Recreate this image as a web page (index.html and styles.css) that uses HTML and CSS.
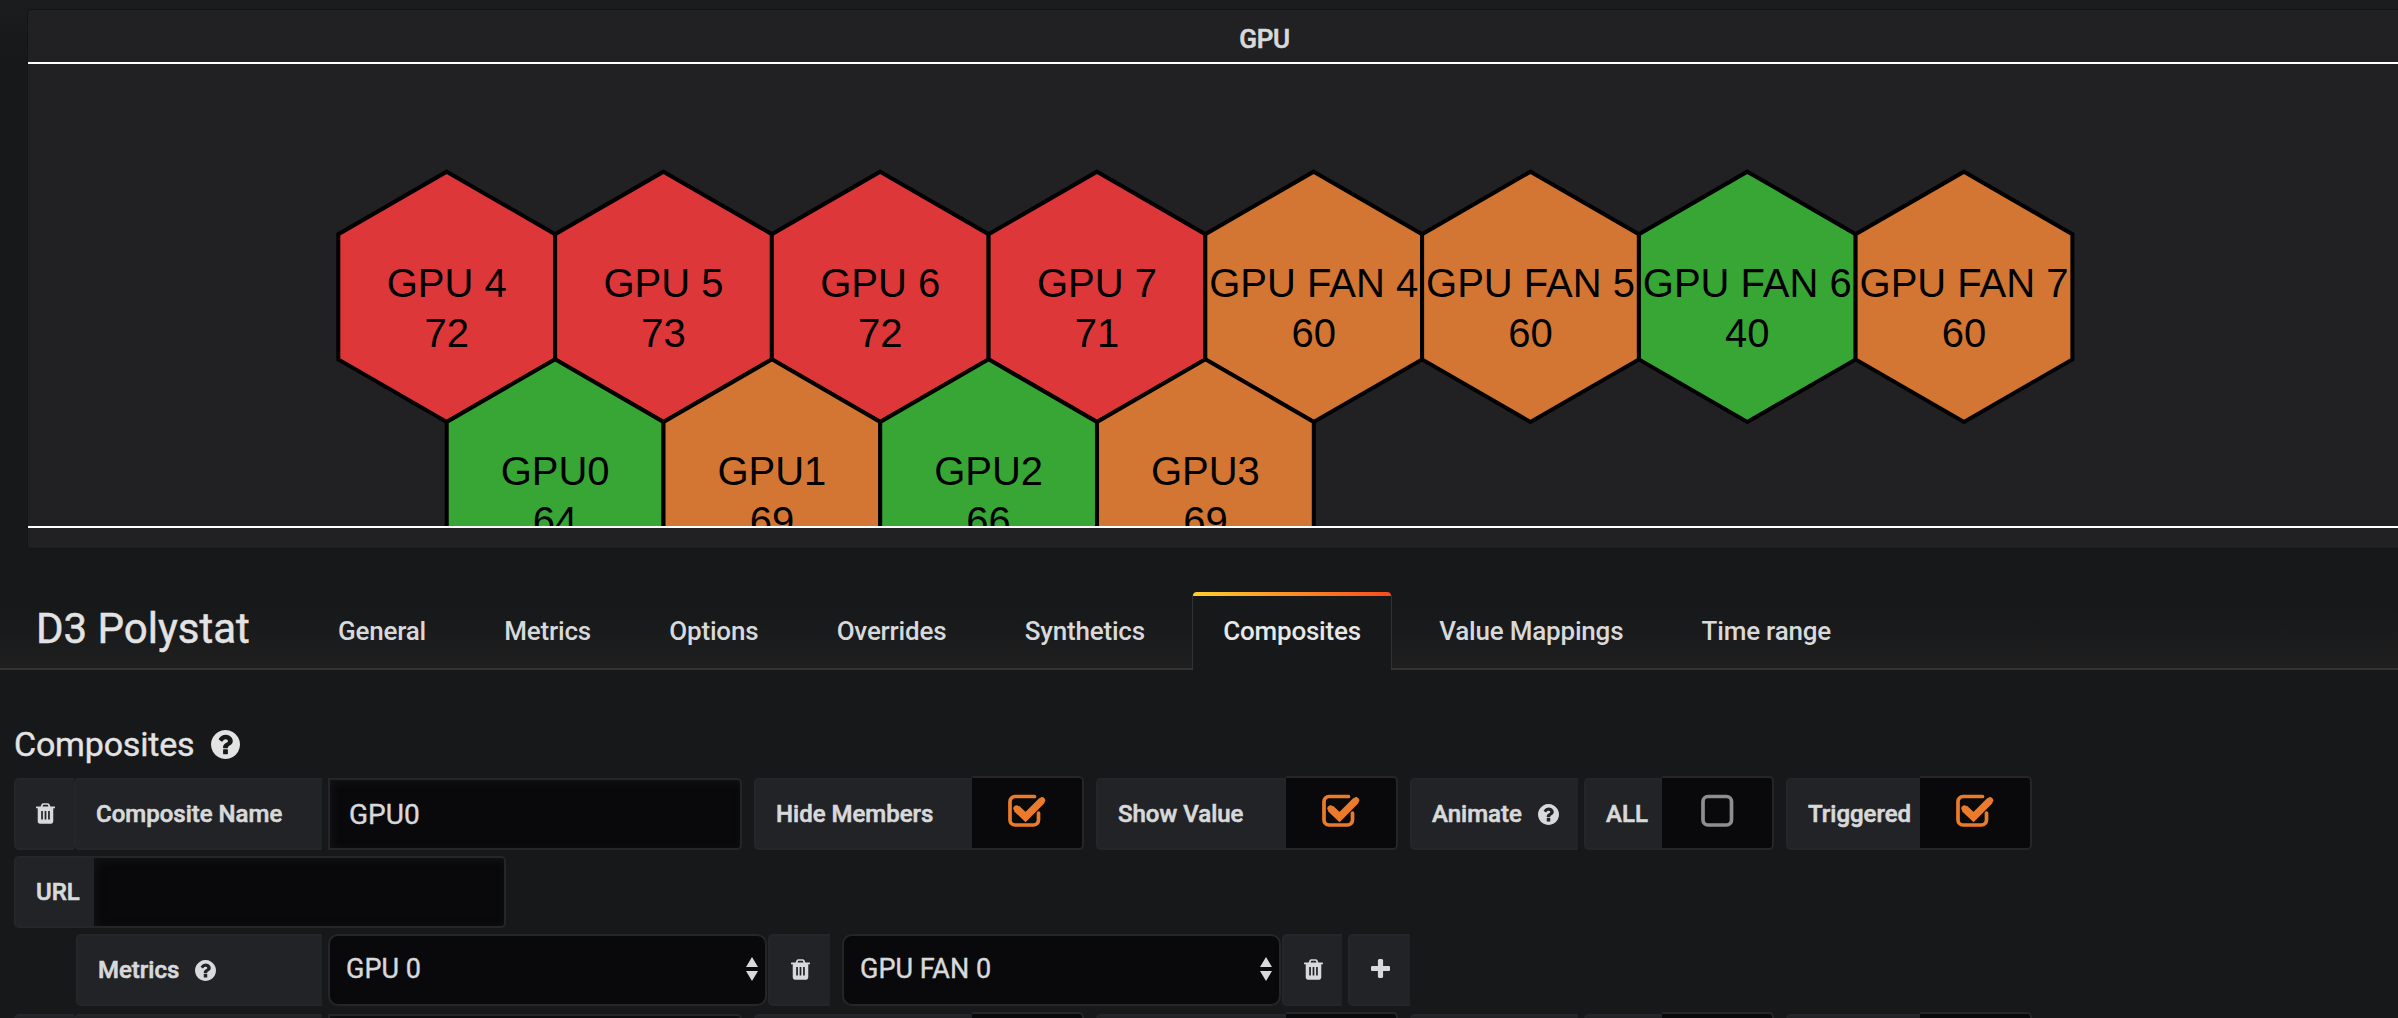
FILE: index.html
```html
<!DOCTYPE html>
<html lang="en">
<head>
<meta charset="utf-8">
<title>D3 Polystat</title>
<link rel="stylesheet" href="styles.css">
</head>
<body>
<svg class="defs" width="0" height="0">
  <symbol id="trash" viewBox="0 0 1408 1536"><path fill-rule="evenodd" d="M512 608v576q0 14-9 23t-23 9h-64q-14 0-23-9t-9-23v-576q0-14 9-23t23-9h64q14 0 23 9t9 23zM768 608v576q0 14-9 23t-23 9h-64q-14 0-23-9t-9-23v-576q0-14 9-23t23-9h64q14 0 23 9t9 23zM1024 608v576q0 14-9 23t-23 9h-64q-14 0-23-9t-9-23v-576q0-14 9-23t23-9h64q14 0 23 9t9 23zM480 256h448l-48-117q-7-9-17-11h-317q-10 2-17 11zM1408 288v64q0 14-9 23t-23 9h-96v948q0 83-47 143.500t-113 60.500h-832q-66 0-113-58.500t-47-141.500v-952h-96q-14 0-23-9t-9-23v-64q0-14 9-23t23-9h309l70-167q15-37 54-63t79-26h320q40 0 79 26t54 63l70 167h309q14 0 23 9t9 23z"/></symbol>
  <symbol id="help" viewBox="0 0 1536 1536"><path fill-rule="evenodd" d="M896 1248v-192q0-14-9-23t-23-9h-192q-14 0-23 9t-9 23v192q0 14 9 23t23 9h192q14 0 23-9t9-23zM1152 576q0-88-55.500-163t-138.500-116-170-41q-243 0-371 213-15 24 8 42l132 100q7 6 19 6 16 0 25-12 53-68 86-92 34-24 86-24 48 0 85.500 26t37.500 59q0 38-20 61t-68 45q-63 28-115.500 86.500t-52.500 125.500v36q0 14 9 23t23 9h192q14 0 23-9t9-23q0-19 21.500-49.500t54.500-49.500q32-18 49-28.500t46-35 44.500-48 28-60.500 12.500-81zM1536 768q0 209-103 385.500t-279.500 279.500-385.500 103-385.500-103-279.500-279.500-103-385.500 103-385.500 279.500-279.500 385.500-103 385.500 103 279.500 279.500 103 385.500z"/></symbol>
  <symbol id="plus" viewBox="0 0 1408 1408"><path d="M1408 608v192q0 40-28 68t-68 28h-416v416q0 40-28 68t-68 28h-192q-40 0-68-28t-28-68v-416h-416q-40 0-68-28t-28-68v-192q0-40 28-68t68-28h416v-416q0-40 28-68t68-28h192q40 0 68 28t28 68v416h416q40 0 68 28t28 68z"/></symbol>
  <symbol id="checked" viewBox="0 0 38 34"><path d="M26.500 2.500H7A5 5 0 0 0 2 7.500v18.500A5 5 0 0 0 7 31h18.500a5 5 0 0 0 5-5v-7" fill="none" stroke="currentColor" stroke-width="3.700" stroke-linecap="round"/><path d="M8.500 14.500l9 8.500L34 6.500" fill="none" stroke="currentColor" stroke-width="7.400"/><path d="M8.500 14.500l.1.100M34 6.500l.1-.1" fill="none" stroke="currentColor" stroke-width="6.200" stroke-linecap="round"/></symbol>
  <symbol id="unchecked" viewBox="0 0 38 34"><rect x="3" y="2.500" width="28.500" height="28.500" rx="5" fill="none" stroke="currentColor" stroke-width="3.700"/></symbol>
  <symbol id="sort" viewBox="0 0 12 24"><path d="M6 0l6 10H0zM0 14h12L6 24z"/></symbol>
</svg>

<section class="panel">
  <header class="panel-title">GPU</header>
  <svg class="polystat" width="2473" height="462" viewBox="28 64 2473 462">
    <defs><path id="hex" d="M0-125.150L108.380-62.570V62.570L0 125.150L-108.380 62.570V-62.570Z"/></defs>
    <g class="red" transform="translate(446.700 296.800)"><use href="#hex"/><text y="0">GPU 4</text><text y="50">72</text></g>
    <g class="red" transform="translate(663.500 296.800)"><use href="#hex"/><text y="0">GPU 5</text><text y="50">73</text></g>
    <g class="red" transform="translate(880.200 296.800)"><use href="#hex"/><text y="0">GPU 6</text><text y="50">72</text></g>
    <g class="red" transform="translate(1097 296.800)"><use href="#hex"/><text y="0">GPU 7</text><text y="50">71</text></g>
    <g class="orange" transform="translate(1313.700 296.800)"><use href="#hex"/><text y="0">GPU FAN 4</text><text y="50">60</text></g>
    <g class="orange" transform="translate(1530.500 296.800)"><use href="#hex"/><text y="0">GPU FAN 5</text><text y="50">60</text></g>
    <g class="green" transform="translate(1747.300 296.800)"><use href="#hex"/><text y="0">GPU FAN 6</text><text y="50">40</text></g>
    <g class="orange" transform="translate(1964 296.800)"><use href="#hex"/><text y="0">GPU FAN 7</text><text y="50">60</text></g>
    <g class="green" transform="translate(555.100 484.500)"><use href="#hex"/><text y="0">GPU0</text><text y="50">64</text></g>
    <g class="orange" transform="translate(771.900 484.500)"><use href="#hex"/><text y="0">GPU1</text><text y="50">69</text></g>
    <g class="green" transform="translate(988.600 484.500)"><use href="#hex"/><text y="0">GPU2</text><text y="50">66</text></g>
    <g class="orange" transform="translate(1205.400 484.500)"><use href="#hex"/><text y="0">GPU3</text><text y="50">69</text></g>
  </svg>
</section>

<nav class="tabs">
  <h1 class="tabs-title">D3 Polystat</h1>
  <a class="tab">General</a>
  <a class="tab">Metrics</a>
  <a class="tab">Options</a>
  <a class="tab">Overrides</a>
  <a class="tab">Synthetics</a>
  <a class="tab active">Composites</a>
  <a class="tab">Value Mappings</a>
  <a class="tab">Time range</a>
</nav>

<main class="editor">
  <h2 class="heading">Composites <svg class="help-lg"><use href="#help"/></svg></h2>

  <div class="row">
    <span class="label icon-label w60"><svg class="trash"><use href="#trash"/></svg></span>
    <span class="label w248">Composite Name</span>
    <span class="input name">GPU0</span>
    <span class="label w218">Hide Members</span>
    <span class="check on"><svg><use href="#checked"/></svg></span>
    <span class="label w190">Show Value</span>
    <span class="check on"><svg><use href="#checked"/></svg></span>
    <span class="label w168">Animate <svg class="help"><use href="#help"/></svg></span>
    <span class="label w78">ALL</span>
    <span class="check"><svg><use href="#unchecked"/></svg></span>
    <span class="label w134">Triggered</span>
    <span class="check on"><svg><use href="#checked"/></svg></span>
  </div>

  <div class="row">
    <span class="label w80">URL</span>
    <span class="input url"></span>
  </div>

  <div class="row indent">
    <span class="label w246">Metrics <svg class="help"><use href="#help"/></svg></span>
    <span class="select first">GPU 0 <svg class="sort"><use href="#sort"/></svg></span>
    <span class="label icon-label w62"><svg class="trash"><use href="#trash"/></svg></span>
    <span class="select second">GPU FAN 0 <svg class="sort"><use href="#sort"/></svg></span>
    <span class="label icon-label w60"><svg class="trash"><use href="#trash"/></svg></span>
    <span class="label icon-label add"><svg class="plus"><use href="#plus"/></svg></span>
  </div>

  <div class="row next">
    <span class="label w60"></span>
    <span class="label w248"></span>
    <span class="input name"></span>
    <span class="label w218"></span>
    <span class="check"></span>
    <span class="label w190"></span>
    <span class="check"></span>
    <span class="label w168"></span>
    <span class="label w78"></span>
    <span class="check"></span>
    <span class="label w134"></span>
    <span class="check"></span>
  </div>
</main>
</body>
</html>
```
FILE: styles.css
```css
* { box-sizing: border-box; }

html, body { height: 100%; overflow: hidden; }

body {
  margin: 0;
  padding-top: 9px;
  background: #171819 linear-gradient(#1b1c1e, #171819 60px) no-repeat;
  color: #d8d9da;
  font-family: Roboto, "Liberation Sans", sans-serif;
}

.defs { position: absolute; }

svg { fill: currentColor; flex: none; }

.panel {
  width: 2475px;
  height: 540px;
  margin-left: 27px;
  border: 1px solid #141414;
  border-radius: 4px;
  background: #212124;
}

.panel-title {
  height: 52px;
  line-height: 58px;
  text-align: center;
  font-size: 26px;
  font-weight: 500;
  letter-spacing: -0.2px;
  -webkit-text-stroke: 0.6px;
}

.polystat {
  display: block;
  box-sizing: content-box;
  border: solid #fff;
  border-width: 2px 0;
}

.polystat use { stroke: #000; stroke-width: 4; }
.polystat text {
  fill: #000;
  font: 40px "Liberation Sans", Arial, sans-serif;
  text-anchor: middle;
}
.red { fill: #dd373a; }
.orange { fill: #d47633; }
.green { fill: #38a635; }

.tabs {
  display: flex;
  align-items: flex-end;
  height: 80px;
  margin-top: 41px;
  padding-left: 36px;
  border-bottom: 2px solid #333334;
  background: linear-gradient(#171819 25%, #1f1f20);
}

.tabs-title {
  width: 271px;
  margin: 0;
  font-size: 42px;
  font-weight: 400;
  line-height: 78px;
  color: #e3e3e3;
  -webkit-text-stroke: 0.5px;
}

.tab {
  height: 76px;
  margin-right: 16.3px;
  padding: 0 30px;
  border: 1px solid transparent;
  border-width: 0 1px;
  font-size: 26px;
  font-weight: 500;
  line-height: 78px;
  letter-spacing: -0.2px;
  white-space: nowrap;
}

.tab.active {
  position: relative;
  height: 78px;
  margin-bottom: -2px;
  border-color: #333334;
  border-radius: 5px 5px 0 0;
  background: #171819;
  color: #e8e8e8;
}

.tab.active::before {
  content: "";
  position: absolute;
  inset: 0 0 auto;
  height: 4px;
  border-radius: 4px 4px 0 0;
  background: linear-gradient(to right, #ffd02f, #f94b1c);
}

.editor { padding: 51px 0 0 14px; }

.heading {
  display: flex;
  align-items: center;
  gap: 17px;
  height: 46px;
  margin: 0 0 11px;
  font-size: 34px;
  font-weight: 400;
  letter-spacing: -0.2px;
  color: #e3e3e3;
  -webkit-text-stroke: 0.4px;
}
.help-lg { width: 29px; height: 29px; }

.row { display: flex; height: 72px; margin-bottom: 6px; }
.indent { padding-left: 62px; }
.next { margin-top: 8px; }

.label {
  display: flex;
  align-items: center;
  flex: none;
  padding: 0 0 0 20px;
  border: 2px solid #262628;
  border-right: 0;
  border-radius: 5px 0 0 5px;
  background: #222326;
  font-size: 24px;
  font-weight: 500;
  white-space: nowrap;
  -webkit-text-stroke: 0.6px;
}
.icon-label { justify-content: center; padding: 0 0 2px; }
.w60 { width: 60px; }
.w62 { width: 62px; }
.w78 { width: 78px; margin-left: 6px; }
.w80 { width: 80px; }
.w134 { width: 134px; }
.w168 { width: 168px; }
.w190 { width: 190px; }
.w218 { width: 218px; }
.w246 { width: 246px; }
.w248 { width: 248px; }
.add { width: 62px; margin-left: 6px; }

.trash { width: 19px; height: 21px; }
.plus { width: 19px; height: 19px; margin-bottom: 2px; }
.help { width: 21px; height: 21px; margin-left: 16px; }

.input, .select {
  display: flex;
  align-items: center;
  flex: none;
  border: 2px solid #262628;
  background: #09090b;
  font-size: 28px;
  -webkit-text-stroke: 0.4px;
}
.input { border-radius: 0 5px 5px 0; box-shadow: inset 2px 2px 8px #141416; }
.name { width: 414px; margin: 0 12px 0 6px; padding-left: 19px; }
.url { width: 412px; border-left: 0; }

.select {
  justify-content: space-between;
  width: 439px;
  padding: 0 7px 2px 16px;
  border-radius: 10px;
  font-size: 27px;
}
.first { margin: 0 1px 0 6px; }
.second { margin: 0 1px 0 12px; }
.sort { width: 12px; height: 24px; }

.check {
  flex: none;
  width: 112px;
  height: 74px;
  margin: -2px 12px 0 0;
  padding: 16px 0 0 36px;
  border: 2px solid #262628;
  border-left: 0;
  border-radius: 0 5px 5px 0;
  background: #09090b;
  color: #8e8e8e;
}
.check:not(.on) { padding-left: 38px; }
.check.on { color: #eb7b2a; }
.check svg { display: block; width: 38px; height: 34px; }
```
